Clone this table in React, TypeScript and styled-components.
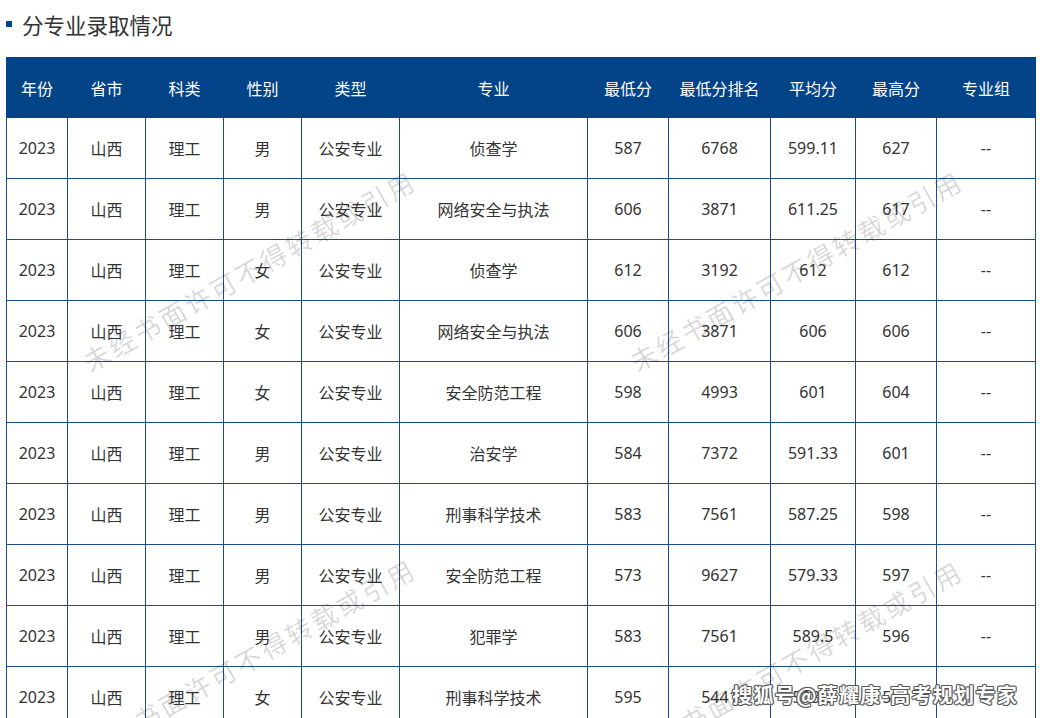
import React from "react";
import styled, { createGlobalStyle } from "styled-components";

const GlobalStyle = createGlobalStyle`
  html, body { margin: 0; padding: 0; background: #ffffff; }
  body {
    width: 1042px;
    height: 718px;
    overflow: hidden;
    font-family: "Noto Sans", "Noto Sans CJK SC", sans-serif;
    color: #333333;
  }
`;

const Page = styled.div`
  position: relative;
  width: 1042px;
  height: 718px;
  overflow: hidden;
  padding: 0 0 0 6px;
  box-sizing: border-box;
`;

const Title = styled.div`
  display: flex;
  align-items: center;
  gap: 10px;
  height: 48px;
  margin-bottom: 9px;
`;

const Square = styled.span`
  display: block;
  width: 6px;
  height: 6px;
  background: #034488;
`;

const TitleText = styled.h2`
  margin: 0;
  font-family: "Noto Sans CJK SC", sans-serif;
  font-weight: 400;
  font-size: 21.5px;
  color: #333333;
  line-height: 1;
  padding-top: 1px;
`;

const Table = styled.table`
  border-collapse: collapse;
  table-layout: fixed;
  width: 1030px;
`;

const HeadCell = styled.th`
  height: 59px;
  padding: 0;
  background: #034488;
  color: #ffffff;
  font-family: "Noto Sans CJK SC", sans-serif;
  font-weight: 400;
  font-size: 16px;
  line-height: 20px;
  text-align: center;
  vertical-align: middle;
  border: 1px solid #034488;
  border-left: 1px solid #ffffff;
  &:first-child { border-left: 1px solid #034488; }
`;

const Cell = styled.td`
  height: 60px;
  padding: 0;
  font-size: 16px;
  color: #333333;
  text-align: center;
  vertical-align: middle;
  border: 1px solid #1b4d8c;
  white-space: nowrap;
`;

const Watermark = styled.span<{ $x: number; $y: number }>`
  position: absolute;
  left: ${(p) => p.$x}px;
  top: ${(p) => p.$y}px;
  transform: translate(-50%, -50%) rotate(-29.5deg);
  white-space: nowrap;
  font-family: "Noto Sans CJK SC", sans-serif;
  font-size: 26px;
  letter-spacing: 3px;
  color: rgba(0, 0, 0, 0.16);
  pointer-events: none;
`;

const Sohu = styled.span`
  position: absolute;
  right: 24px;
  bottom: 9px;
  white-space: nowrap;
  font-family: "Noto Sans CJK SC", sans-serif;
  font-size: 20px;
  font-weight: 700;
  letter-spacing: 1.3px;
  color: #ffffff;
  text-shadow: 1px 0 #555, -1px 0 #555, 0 1px #555, 0 -1px #555,
    1px 1px #777, -1px -1px #777, 1px -1px #777, -1px 1px #777;
  pointer-events: none;
`;

const widths = [61, 78, 78, 78, 98, 188, 81, 102, 85, 81, 99];
const headers = ["年份", "省市", "科类", "性别", "类型", "专业", "最低分", "最低分排名", "平均分", "最高分", "专业组"];

const rows: string[][] = [
  ["男", "侦查学", "587", "6768", "599.11", "627"],
  ["男", "网络安全与执法", "606", "3871", "611.25", "617"],
  ["女", "侦查学", "612", "3192", "612", "612"],
  ["女", "网络安全与执法", "606", "3871", "606", "606"],
  ["女", "安全防范工程", "598", "4993", "601", "604"],
  ["男", "治安学", "584", "7372", "591.33", "601"],
  ["男", "刑事科学技术", "583", "7561", "587.25", "598"],
  ["男", "安全防范工程", "573", "9627", "579.33", "597"],
  ["男", "犯罪学", "583", "7561", "589.5", "596"],
  ["女", "刑事科学技术", "595", "5441", "598.5", "599"],
];

const marks = [
  { x: 249, y: 270 },
  { x: 796, y: 270 },
  { x: 249, y: 658 },
  { x: 796, y: 660 },
];

export default function App() {
  return (
    <>
      <GlobalStyle />
      <Page>
        <Title>
          <Square />
          <TitleText>分专业录取情况</TitleText>
        </Title>
        <Table>
          <colgroup>
            {widths.map((w, i) => (
              <col key={i} style={{ width: w }} />
            ))}
          </colgroup>
          <thead>
            <tr>
              {headers.map((h) => (
                <HeadCell key={h}>{h}</HeadCell>
              ))}
            </tr>
          </thead>
          <tbody>
            {rows.map((r, i) => (
              <tr key={i}>
                <Cell>2023</Cell>
                <Cell>山西</Cell>
                <Cell>理工</Cell>
                <Cell>{r[0]}</Cell>
                <Cell>公安专业</Cell>
                <Cell>{r[1]}</Cell>
                <Cell>{r[2]}</Cell>
                <Cell>{r[3]}</Cell>
                <Cell>{r[4]}</Cell>
                <Cell>{r[5]}</Cell>
                <Cell>--</Cell>
              </tr>
            ))}
          </tbody>
        </Table>
        {marks.map((m, i) => (
          <Watermark key={i} $x={m.x} $y={m.y}>
            未经书面许可不得转载或引用
          </Watermark>
        ))}
        <Sohu>搜狐号@薛耀康-高考规划专家</Sohu>
      </Page>
    </>
  );
}
